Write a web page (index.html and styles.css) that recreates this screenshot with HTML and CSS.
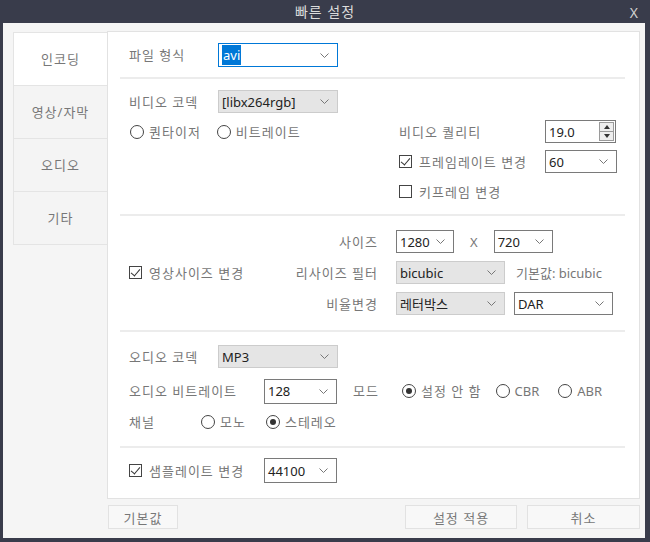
FILE: index.html
```html
<!DOCTYPE html>
<html lang="ko">
  <head>
    <meta charset="UTF-8" />
    <title>빠른 설정</title>
    <link rel="stylesheet" href="styles.css">
  </head>
  <body>
    <div class="window">
      <div class="titlebar">
        <span class="title">빠른 설정</span>
        <span class="close">X</span>
      </div>
      <div class="client">
        <div class="main">
          <ul class="tabs">
            <li class="active">인코딩</li>
            <li>영상/자막</li>
            <li>오디오</li>
            <li>기타</li>
          </ul>
          <div class="panel">
            <!-- file format -->
            <section class="sec sec-format">
              <span class="lbl w89">파일 형식</span>
              <div class="select focus w120">
                <span class="val"><span class="hl">avi</span></span>
                <svg class="chev" viewBox="0 0 9 5"><polyline points="0.5,0.5 4.5,4.5 8.5,0.5" /></svg>
              </div>
            </section>

            <!-- video -->
            <section class="sec sec-video">
              <div class="row span2">
                <span class="lbl w89">비디오 코덱</span>
                <div class="select grey w120">
                  <span class="val">[libx264rgb]</span>
                  <svg class="chev" viewBox="0 0 9 5"><polyline points="0.5,0.5 4.5,4.5 8.5,0.5" /></svg>
                </div>
              </div>
              <div class="row">
                <span class="radio"><i></i>퀀타이저</span>
                <span class="radio gap-r"><i></i>비트레이트</span>
              </div>
              <div class="row">
                <span class="lbl w146">비디오 퀄리티</span>
                <div class="spin">
                  <span class="val">19.0</span>
                  <span class="spin-btns">
                    <b class="up"></b>
                    <b class="down"></b>
                  </span>
                </div>
              </div>
              <div class="row col2">
                <span class="check on w146"><i></i>프레임레이트 변경</span>
                <div class="select w72">
                  <span class="val">60</span>
                  <svg class="chev" viewBox="0 0 9 5"><polyline points="0.5,0.5 4.5,4.5 8.5,0.5" /></svg>
                </div>
              </div>
              <div class="row col2">
                <span class="check"><i></i>키프레임 변경</span>
              </div>
            </section>

            <!-- size -->
            <section class="sec sec-size">
              <span class="check on resize"><i></i>영상사이즈 변경</span>
              <span class="lbl right">사이즈</span>
              <div class="row">
                <div class="select w58">
                  <span class="val">1280</span>
                  <svg class="chev" viewBox="0 0 9 5"><polyline points="0.5,0.5 4.5,4.5 8.5,0.5" /></svg>
                </div>
                <span class="times">X</span>
                <div class="select w59">
                  <span class="val">720</span>
                  <svg class="chev" viewBox="0 0 9 5"><polyline points="0.5,0.5 4.5,4.5 8.5,0.5" /></svg>
                </div>
              </div>
              <span class="lbl right">리사이즈 필터</span>
              <div class="row">
                <div class="select grey w109">
                  <span class="val">bicubic</span>
                  <svg class="chev" viewBox="0 0 9 5"><polyline points="0.5,0.5 4.5,4.5 8.5,0.5" /></svg>
                </div>
                <span class="hint">기본값: bicubic</span>
              </div>
              <span class="lbl right">비율변경</span>
              <div class="row">
                <div class="select grey w109">
                  <span class="val">레터박스</span>
                  <svg class="chev" viewBox="0 0 9 5"><polyline points="0.5,0.5 4.5,4.5 8.5,0.5" /></svg>
                </div>
                <div class="select w99 ml9">
                  <span class="val">DAR</span>
                  <svg class="chev" viewBox="0 0 9 5"><polyline points="0.5,0.5 4.5,4.5 8.5,0.5" /></svg>
                </div>
              </div>
            </section>

            <!-- audio -->
            <section class="sec sec-audio">
              <div class="row">
                <span class="lbl w89">오디오 코덱</span>
                <div class="select grey w120">
                  <span class="val">MP3</span>
                  <svg class="chev" viewBox="0 0 9 5"><polyline points="0.5,0.5 4.5,4.5 8.5,0.5" /></svg>
                </div>
              </div>
              <div class="row tall bitrate">
                <span class="lbl w135">오디오 비트레이트</span>
                <div class="select w73 tall">
                  <span class="val">128</span>
                  <svg class="chev" viewBox="0 0 9 5"><polyline points="0.5,0.5 4.5,4.5 8.5,0.5" /></svg>
                </div>
                <span class="lbl mode">모드</span>
                <span class="radio on"><i></i>설정 안 함</span>
                <span class="radio latin cbr"><i></i>CBR</span>
                <span class="radio latin abr"><i></i>ABR</span>
              </div>
              <div class="row channel">
                <span class="lbl w71">채널</span>
                <span class="radio"><i></i>모노</span>
                <span class="radio on stereo"><i></i>스테레오</span>
              </div>
            </section>

            <!-- sample rate -->
            <section class="sec sec-rate">
              <span class="check on w135"><i></i>샘플레이트 변경</span>
              <div class="select w73 tall">
                <span class="val">44100</span>
                <svg class="chev" viewBox="0 0 9 5"><polyline points="0.5,0.5 4.5,4.5 8.5,0.5" /></svg>
              </div>
            </section>
          </div>
        </div>
        <div class="buttons">
          <button class="btn w70">기본값</button>
          <button class="btn w112 push">설정 적용</button>
          <button class="btn w113">취소</button>
        </div>
      </div>
    </div>
  </body>
</html>
```

FILE: styles.css
```css
body {
  margin: 0;
  background: #393c4b;
  font-family: "Noto Sans", "Noto Sans CJK KR", sans-serif;
  font-size: 13px;
  color: #777;
}
.window {
  width: 650px;
  height: 542px;
  display: flex;
  flex-direction: column;
}
.titlebar {
  height: 23px;
  display: flex;
  align-items: center;
  justify-content: center;
  position: relative;
}
.title {
  color: #dcdcdc;
  font-size: 14px;
  line-height: 23px;
  letter-spacing: 1px;
}
.close {
  position: absolute;
  right: 12px;
  top: 0;
  line-height: 25px;
  color: #d0d0d0;
  font-size: 14px;
}
.client {
  margin: 0 5px 5px 3px;
  background: #f5f5f5;
  padding: 8px 5px 9px 10px;
  flex: 1;
  display: flex;
  flex-direction: column;
}
.main {
  display: flex;
}
.tabs {
  list-style: none;
  margin: 1px 0 0 0;
  padding: 0;
  width: 94px;
  flex: none;
}
.tabs li {
  height: 52px;
  line-height: 52px;
  text-align: center;
  background: #f4f4f4;
  border: 1px solid #e4e4e4;
  border-top: none;
  border-right: none;
  color: #777;
  letter-spacing: 1px;
}
.tabs li.active {
  background: #fff;
  border-top: 1px solid #e4e4e4;
}
.panel {
  flex: 1;
  min-width: 0;
  background: #fff;
  border: 1px solid #e2e2e2;
  padding: 0 14px 0 12px;
}
.sec {
  border-bottom: 2px solid #ececec;
  padding-left: 9px;
}
.sec:last-child {
  border-bottom: none;
}
.row {
  display: flex;
  align-items: center;
  height: 23px;
}
.row.tall {
  height: 24px;
}
.lbl {
  white-space: nowrap;
  line-height: 16px;
  letter-spacing: 1px;
}
.right {
  text-align: right;
}
.w58 { width: 58px; }
.w59 { width: 59px; }
.w70 { width: 70px; }
.w71 { width: 71px; flex: none; }
.w72 { width: 72px; }
.w73 { width: 73px; }
.w89 { width: 89px; flex: none; }
.w99 { width: 99px; }
.w109 { width: 109px; }
.w112 { width: 112px; }
.w113 { width: 113px; }
.w120 { width: 120px; }
.w135 { width: 135px; flex: none; }
.w146 { width: 146px; flex: none; }
.ml9 { margin-left: 9px; }

/* dropdowns */
.select {
  box-sizing: border-box;
  height: 23px;
  border: 1px solid #7a7a7a;
  background: #fff;
  display: flex;
  align-items: center;
  justify-content: space-between;
  padding: 0 8px 0 3px;
  color: #222;
  flex: none;
}
.select.tall {
  height: 25px;
}
.select.grey {
  background: #e5e5e5;
  border-color: #cccccc;
}
.select.focus {
  border-color: #0078d7;
  height: 24px;
}
.val {
  line-height: 16px;
  white-space: nowrap;
}
.hl {
  background: #0078d7;
  color: #fff;
  padding: 1px 1px;
}
.chev {
  width: 9px;
  height: 5px;
  fill: none;
  stroke: #777;
  stroke-width: 1;
}

/* radio and checkbox */
.radio,
.check {
  display: flex;
  align-items: center;
  white-space: nowrap;
  line-height: 16px;
  letter-spacing: 1px;
}
.radio.latin {
  letter-spacing: 0;
}
.radio i {
  width: 12px;
  height: 12px;
  border: 1px solid #444;
  border-radius: 50%;
  margin: 0 5px 0 1px;
  display: flex;
  align-items: center;
  justify-content: center;
}
.radio.on i::after {
  content: "";
  width: 6px;
  height: 6px;
  border-radius: 50%;
  background: #333;
}
.check i {
  width: 11px;
  height: 11px;
  border: 1px solid #444;
  margin-right: 7px;
  position: relative;
}
.check.on i::after {
  content: "";
  position: absolute;
  left: 3px;
  top: 0px;
  width: 4px;
  height: 8px;
  border: solid #333;
  border-width: 0 1.5px 1.5px 0;
  transform: rotate(40deg);
}

/* video section */
.sec-format {
  display: flex;
  align-items: center;
  padding-top: 11px;
  padding-bottom: 10px;
}
.sec-video {
  display: grid;
  grid-template-columns: 270px 1fr;
  grid-template-rows: 23px 23px 23px 23px;
  row-gap: 7px;
  padding-top: 11px;
  padding-bottom: 11px;
}
.sec-video .span2 {
  grid-column: 1 / 3;
}
.sec-video .col2 {
  grid-column: 2;
}
.gap-r {
  margin-left: 15px;
}
.spin {
  box-sizing: border-box;
  width: 71px;
  height: 23px;
  border: 1px solid #7a7a7a;
  display: flex;
  align-items: center;
  justify-content: space-between;
  padding: 0 1px 0 3px;
  color: #222;
}
.spin-btns {
  display: flex;
  flex-direction: column;
  border: 1px solid #9a9a9a;
  background: #eee;
  width: 13px;
}
.spin-btns b {
  height: 8px;
  display: flex;
  align-items: center;
  justify-content: center;
}
.spin-btns .up {
  border-bottom: 1px solid #9a9a9a;
}
.spin-btns .up::after {
  content: "";
  border: 3px solid transparent;
  border-bottom: 4px solid #333;
  border-top: none;
}
.spin-btns .down::after {
  content: "";
  border: 3px solid transparent;
  border-top: 4px solid #333;
  border-bottom: none;
}

/* size section */
.sec-size {
  display: grid;
  grid-template-columns: 132px 99px auto;
  grid-template-rows: 23px 23px 23px;
  column-gap: 18px;
  row-gap: 8px;
  align-items: center;
  padding-top: 14px;
  padding-bottom: 15px;
}
.sec-size .resize {
  grid-column: 1;
  grid-row: 1 / 4;
}
.sec-size .lbl.right {
  grid-column: 2;
}
.sec-size .row {
  grid-column: 3;
}
.times {
  margin: 0 16px;
  color: #777;
}
.hint {
  margin-left: 11px;
  color: #777;
  white-space: nowrap;
}

/* audio section */
.sec-audio {
  padding-top: 13px;
  padding-bottom: 13px;
  display: flex;
  flex-direction: column;
}
.bitrate {
  margin-top: 11px;
}
.channel {
  margin-top: 7px;
}
.mode {
  margin-left: 16px;
  margin-right: 22px;
}
.cbr {
  margin-left: 13px;
}
.abr {
  margin-left: 18px;
}
.stereo {
  margin-left: 19px;
}
.sec-rate {
  display: flex;
  align-items: center;
  padding-top: 10px;
  padding-bottom: 15px;
}

/* bottom buttons */
.buttons {
  display: flex;
  margin-top: 6px;
  padding-left: 95px;
}
.btn {
  height: 24px;
  border: 1px solid #e2e2e2;
  background: #f8f8f8;
  color: #777;
  font-family: "Noto Sans", "Noto Sans CJK KR", sans-serif;
  font-size: 13px;
  letter-spacing: 1px;
  padding: 0;
  margin-right: 10px;
}
.btn:last-child {
  margin-right: 0;
}
.push {
  margin-left: auto;
}
```
